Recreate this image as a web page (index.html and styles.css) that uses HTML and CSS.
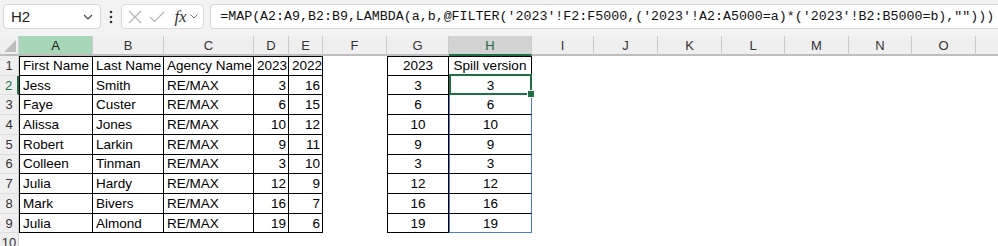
FILE: index.html
```html
<!DOCTYPE html>
<html>
<head>
<meta charset="utf-8">
<link rel="stylesheet" href="styles.css">
</head>
<body>
<div class="app">
  <div class="toolbar">
    <div class="namebox">
      <span class="ref">H2</span>
      <svg class="chev" width="10" height="6" viewBox="0 0 10 6"><path d="M1 1 L5 5 L9 1" fill="none" stroke="#444" stroke-width="1.2"/></svg>
    </div>
    <div class="dots">
      <svg width="4" height="14" viewBox="0 0 4 14"><circle cx="2" cy="2" r="1.3" fill="#333"/><circle cx="2" cy="7" r="1.3" fill="#333"/><circle cx="2" cy="12" r="1.3" fill="#333"/></svg>
    </div>
    <div class="fxbox">
      <svg width="14" height="14" viewBox="0 0 14 14"><path d="M1 1 L13 13 M13 1 L1 13" stroke="#b5b5b5" stroke-width="1.2" fill="none"/></svg>
      <svg width="16" height="12" viewBox="0 0 16 12"><path d="M1 6 L5.5 10.5 L15 1" stroke="#b5b5b5" stroke-width="1.2" fill="none"/></svg>
      <span class="fx">fx</span>
      <svg width="8" height="5" viewBox="0 0 8 5"><path d="M0.5 0.5 L4 4 L7.5 0.5" fill="none" stroke="#777" stroke-width="1"/></svg>
    </div>
    <div class="formula">=MAP(A2:A9,B2:B9,LAMBDA(a,b,@FILTER('2023'!F2:F5000,('2023'!A2:A5000=a)*('2023'!B2:B5000=b),"")))</div>
  </div>

  <div class="sheet">
    <div class="corner"><svg width="12" height="12" viewBox="0 0 12 12"><polygon points="12,0 12,12 0,12" fill="#bdbdbd"/></svg></div>
    <div class="ch sel-a">A</div>
    <div class="ch">B</div>
    <div class="ch">C</div>
    <div class="ch">D</div>
    <div class="ch">E</div>
    <div class="ch">F</div>
    <div class="ch">G</div>
    <div class="ch sel-h">H</div>
    <div class="ch">I</div>
    <div class="ch">J</div>
    <div class="ch">K</div>
    <div class="ch">L</div>
    <div class="ch">M</div>
    <div class="ch">N</div>
    <div class="ch">O</div>
    <div class="ch last"></div>

    <div class="rh">1</div>
    <div class="c t top first">First Name</div>
    <div class="c t top">Last Name</div>
    <div class="c t top">Agency Name</div>
    <div class="c t top">2023</div>
    <div class="c t top">2022</div>
    <div class="c"></div>
    <div class="c g top">2023</div>
    <div class="c h1 top">Spill version</div>
    <div class="c rest"></div>

    <div class="rh rh-sel">2</div>
    <div class="c t first">Jess</div>
    <div class="c t">Smith</div>
    <div class="c t">RE/MAX</div>
    <div class="c t num">3</div>
    <div class="c t num">16</div>
    <div class="c"></div>
    <div class="c g">3</div>
    <div class="c h active">3</div>
    <div class="c rest"></div>

    <div class="rh">3</div>
    <div class="c t first">Faye</div>
    <div class="c t">Custer</div>
    <div class="c t">RE/MAX</div>
    <div class="c t num">6</div>
    <div class="c t num">15</div>
    <div class="c"></div>
    <div class="c g">6</div>
    <div class="c h">6</div>
    <div class="c rest"></div>

    <div class="rh">4</div>
    <div class="c t first">Alissa</div>
    <div class="c t">Jones</div>
    <div class="c t">RE/MAX</div>
    <div class="c t num">10</div>
    <div class="c t num">12</div>
    <div class="c"></div>
    <div class="c g">10</div>
    <div class="c h">10</div>
    <div class="c rest"></div>

    <div class="rh">5</div>
    <div class="c t first">Robert</div>
    <div class="c t">Larkin</div>
    <div class="c t">RE/MAX</div>
    <div class="c t num">9</div>
    <div class="c t num">11</div>
    <div class="c"></div>
    <div class="c g">9</div>
    <div class="c h">9</div>
    <div class="c rest"></div>

    <div class="rh">6</div>
    <div class="c t first">Colleen</div>
    <div class="c t">Tinman</div>
    <div class="c t">RE/MAX</div>
    <div class="c t num">3</div>
    <div class="c t num">10</div>
    <div class="c"></div>
    <div class="c g">3</div>
    <div class="c h">3</div>
    <div class="c rest"></div>

    <div class="rh">7</div>
    <div class="c t first">Julia</div>
    <div class="c t">Hardy</div>
    <div class="c t">RE/MAX</div>
    <div class="c t num">12</div>
    <div class="c t num">9</div>
    <div class="c"></div>
    <div class="c g">12</div>
    <div class="c h">12</div>
    <div class="c rest"></div>

    <div class="rh">8</div>
    <div class="c t first">Mark</div>
    <div class="c t">Bivers</div>
    <div class="c t">RE/MAX</div>
    <div class="c t num">16</div>
    <div class="c t num">7</div>
    <div class="c"></div>
    <div class="c g">16</div>
    <div class="c h">16</div>
    <div class="c rest"></div>

    <div class="rh">9</div>
    <div class="c t first">Julia</div>
    <div class="c t">Almond</div>
    <div class="c t">RE/MAX</div>
    <div class="c t num">19</div>
    <div class="c t num">6</div>
    <div class="c"></div>
    <div class="c g">19</div>
    <div class="c h hlast">19</div>
    <div class="c rest"></div>

    <div class="rh">10</div>
    <div class="c full"></div>
  </div>
</div>
</body>
</html>
```

FILE: styles.css
```css
* { box-sizing: border-box; }
html, body { margin: 0; padding: 0; }
body {
  width: 998px;
  height: 246px;
  overflow: hidden;
  background: #ffffff;
  font-family: "Liberation Sans", Arial, sans-serif;
}
.app { width: 998px; }

.toolbar {
  height: 36px;
  background: #f3f3f3;
  display: flex;
  align-items: flex-start;
  padding: 4px 0 0 3px;
  white-space: nowrap;
  overflow: hidden;
}
.namebox {
  width: 99px;
  height: 25px;
  background: #fff;
  border: 1px solid #d6d6d6;
  border-radius: 4px;
  display: flex;
  align-items: center;
  justify-content: space-between;
  padding: 0 7px 0 7px;
}
.ref { font-size: 15px; color: #222; }
.dots {
  width: 21px;
  height: 25px;
  display: flex;
  align-items: center;
  justify-content: center;
}
.fxbox {
  width: 84px;
  height: 25px;
  background: #fff;
  border: 1px solid #dadada;
  border-radius: 4px;
  display: flex;
  align-items: center;
  gap: 7px;
  padding-left: 6px;
}
.fx {
  font-family: "Liberation Serif", "DejaVu Serif", serif;
  font-style: italic;
  font-size: 17px;
  color: #333;
  margin-left: 2px;
  margin-right: -4px;
}
.formula {
  margin-left: 6px;
  height: 25px;
  width: 800px;
  background: #fff;
  border: 1px solid #d6d6d6;
  border-right: none;
  border-radius: 4px 0 0 4px;
  font-family: "Liberation Mono", "DejaVu Sans Mono", monospace;
  font-size: 13.3px;
  color: #111;
  line-height: 23px;
  padding-left: 9px;
}

.sheet {
  display: grid;
  grid-template-columns: 19px 74px 71px 90px 35px 34px 64px 62px 83px 62px 64px 64px 63px 64px 63px 64px 22px;
  grid-template-rows: 20px repeat(9, 19.72px) 20px;
  font-size: 13.5px;
  color: #000;
}
.corner {
  background: #efefef;
  border-bottom: 2px solid #bdbdbd;
  border-right: 1px solid #d0d0d0;
  display: flex;
  align-items: flex-end;
  justify-content: flex-end;
  padding: 0 2px 2px 0;
}
.ch {
  background: #efefef;
  border-bottom: 2px solid #bdbdbd;
  border-right: 1px solid #cacaca;
  color: #333;
  font-size: 13px;
  display: flex;
  align-items: center;
  justify-content: center;
}
.ch.sel-a { background: #a7d7b8; color: #222; }
.ch.sel-h { background: #d3d3d3; border-bottom-color: #1f7145; color: #1d6a40; }
.ch.last { border-right: none; }

.rh {
  background: #efefef;
  border-right: 1px solid #d0d0d0;
  border-bottom: 1px solid #dedede;
  color: #333;
  font-size: 13px;
  display: flex;
  align-items: center;
  justify-content: center;
}
.rh-sel { color: #1d7044; border-right: 2px solid #1f7145; }

.c {
  display: flex;
  align-items: center;
  padding: 0 3px;
  white-space: nowrap;
  overflow: visible;
}
.c.rest { grid-column: span 8; }
.c.full { grid-column: span 16; }

.t { border-right: 1px solid #000; border-bottom: 1px solid #000; }
.t.first { border-left: 1px solid #000; }
.top { border-top: 1px solid #000; }
.num { justify-content: flex-end; padding-right: 2px; }

.g {
  border-left: 1px solid #000;
  border-right: 1px solid #000;
  border-bottom: 1px solid #000;
  justify-content: center;
}
.h1 {
  border-right: 1px solid #000;
  border-bottom: 1px solid #000;
  justify-content: center;
}
.h {
  border-left: 1px solid #4a7ed0;
  border-right: 1px solid #4a7ed0;
  border-bottom: 1px solid #000;
  justify-content: center;
}
.h.hlast { border-bottom: 1px solid #4a7ed0; }

.active { position: relative; }
.active::after {
  content: "";
  position: absolute;
  left: -1px;
  top: -2px;
  right: -1px;
  bottom: -1px;
  border: 2px solid #1f7145;
}
.active::before {
  content: "";
  position: absolute;
  right: -4px;
  bottom: -4px;
  width: 6px;
  height: 6px;
  background: #1f7145;
  border: 1px solid #fff;
  z-index: 2;
}
```
